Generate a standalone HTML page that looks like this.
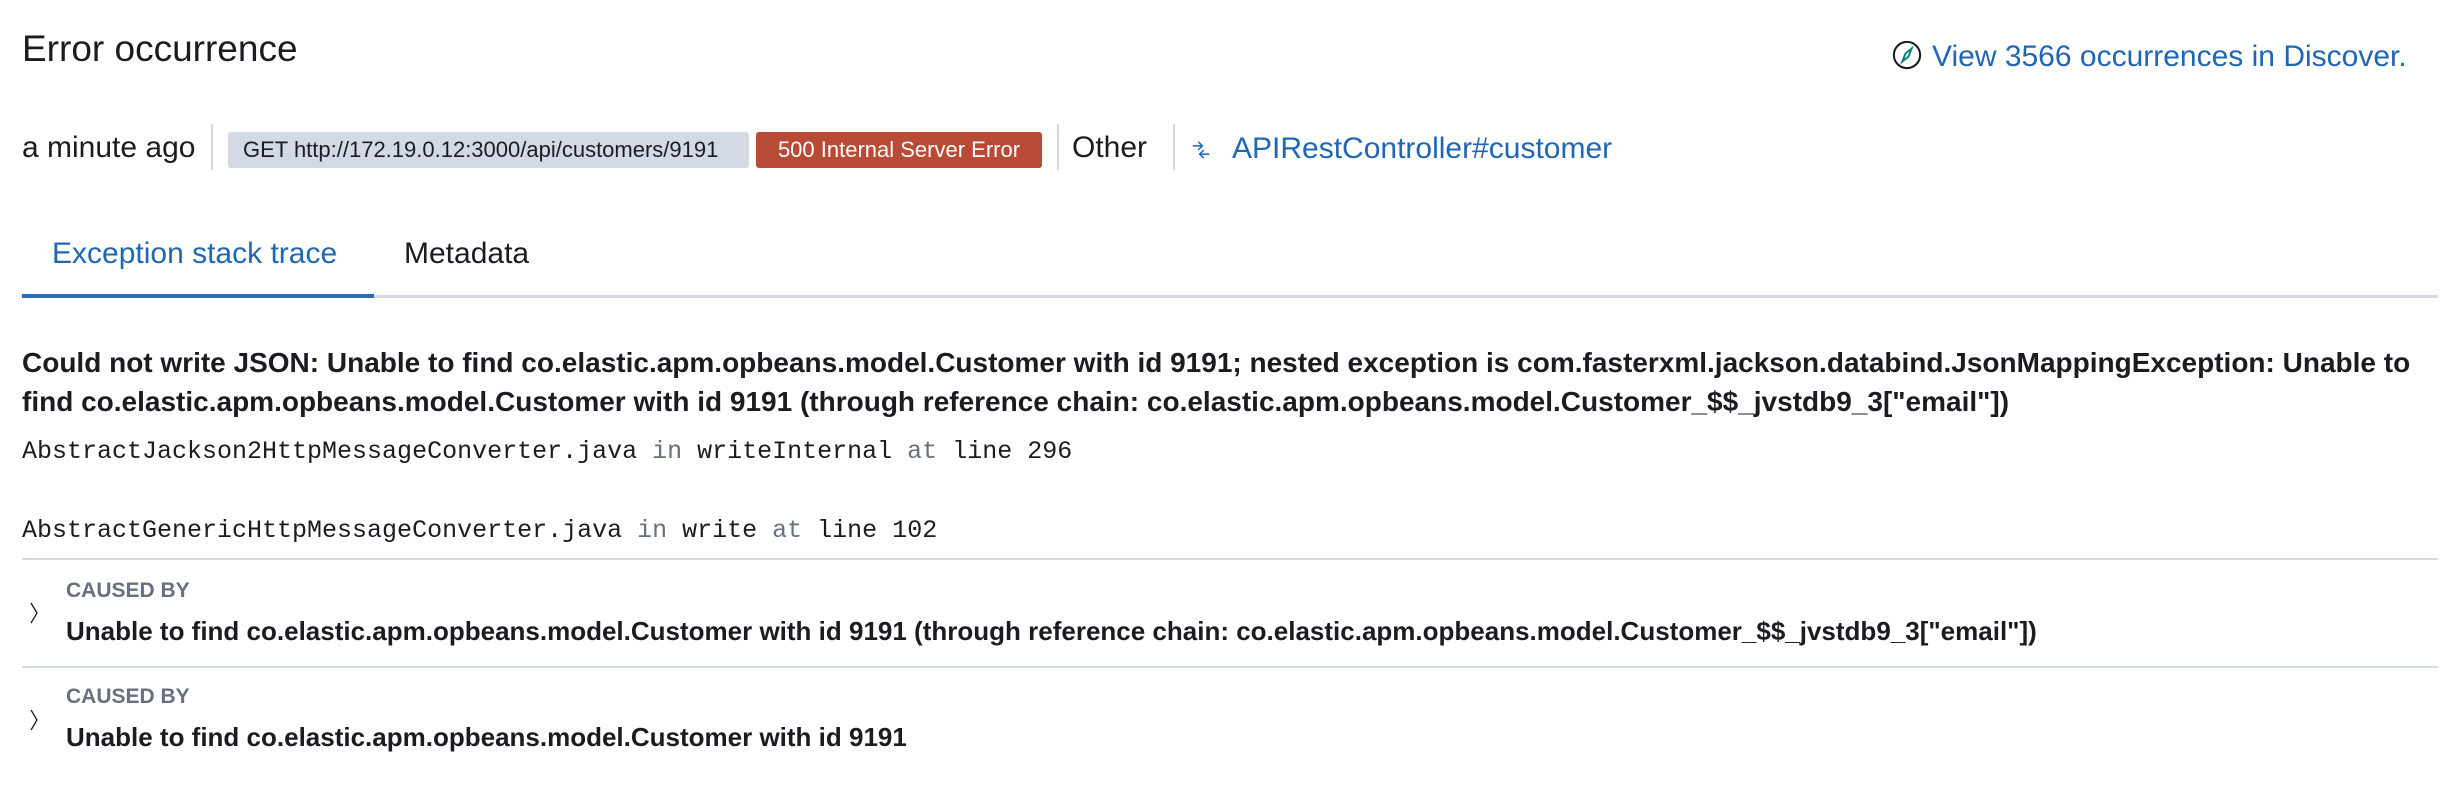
<!DOCTYPE html>
<html><head><meta charset="utf-8"><style>
*{margin:0;padding:0;box-sizing:border-box}
body{width:2458px;height:788px;background:#fff;font-family:"Liberation Sans",sans-serif;color:#1a1c21;position:relative;overflow:hidden}
.a{position:absolute;white-space:nowrap}
.blue{color:#1f66b3}
.mono{font-family:"Liberation Mono",monospace;font-size:25px}
.g{color:#69707d}
.sep{position:absolute;width:2px;background:#d3dae6}
.hl{position:absolute;height:2px;background:#d3dae6;left:22px;width:2416px}
.bold{font-weight:bold;font-size:26px}
.cb{font-weight:bold;font-size:21px;color:#69707d}
</style></head><body>
<div class="a" style="left:22px;top:28px;font-size:37px">Error occurrence</div>
<div class="a blue" style="left:1892px;top:40px;font-size:30px">
<svg width="30" height="30" viewBox="0 0 16 16" style="vertical-align:-4px;margin-right:10px"><circle cx="8" cy="8" r="7" fill="none" stroke="#1a1c21" stroke-width="1.1"/><path d="M10.5 4.5 L8.8 8.8 L5.5 11.5 L7.2 7.2Z" fill="none" stroke="#017d73" stroke-width="1"/></svg>View 3566 occurrences in Discover.</div>

<div class="a" style="left:22px;top:131px;font-size:30px">a minute ago</div>
<div class="sep" style="left:211px;top:124px;height:46px"></div>
<div class="a" style="left:228px;top:132px;width:521px;height:36px;background:#d3dae6;border-radius:3px;font-size:22px;line-height:36px;padding-left:15px">GET http://172.19.0.12:3000/api/customers/9191</div>
<div class="a" style="left:756px;top:132px;width:286px;height:36px;background:#b84a36;border-radius:3px;font-size:22px;line-height:36px;color:#fff;text-align:center">500 Internal Server Error</div>
<div class="sep" style="left:1057px;top:124px;height:46px"></div>
<div class="a" style="left:1072px;top:131px;font-size:30px">Other</div>
<div class="sep" style="left:1173px;top:124px;height:46px"></div>
<svg class="a" style="left:1190px;top:137px" width="22" height="26" viewBox="0 0 16 16"><path d="M2 5h7M6 2l3 3-3 3M14 11H7M10 8l-3 3 3 3" fill="none" stroke="#1f66b3" stroke-width="1.1"/></svg>
<div class="a blue" style="left:1232px;top:132px;font-size:30px">APIRestController#customer</div>

<div class="a blue" style="left:52px;top:237px;font-size:30px">Exception stack trace</div>
<div class="a" style="left:404px;top:237px;font-size:30px">Metadata</div>
<div class="a" style="left:22px;top:295px;width:2416px;height:3px;background:#d3dae6"></div>
<div class="a" style="left:22px;top:294px;width:352px;height:4px;background:#2a6bb5"></div>

<div class="a bold" style="left:22px;top:347px;font-size:28px">Could not write JSON: Unable to find co.elastic.apm.opbeans.model.Customer with id 9191; nested exception is com.fasterxml.jackson.databind.JsonMappingException: Unable to</div>
<div class="a bold" style="left:22px;top:386px;font-size:28px">find co.elastic.apm.opbeans.model.Customer with id 9191 (through reference chain: co.elastic.apm.opbeans.model.Customer_$$_jvstdb9_3["email"])</div>
<div class="a mono" style="left:22px;top:437px">AbstractJackson2HttpMessageConverter.java <span class="g">in</span> writeInternal <span class="g">at</span> line 296</div>
<div class="a mono" style="left:22px;top:516px">AbstractGenericHttpMessageConverter.java <span class="g">in</span> write <span class="g">at</span> line 102</div>
<div class="hl" style="top:558px"></div>
<div class="a cb" style="left:66px;top:579px">CAUSED BY</div>
<svg class="a" style="left:28px;top:601px" width="12" height="24" viewBox="0 0 12 24"><path d="M3 2l6 10-6 10" fill="none" stroke="#1a1c21" stroke-width="1.3"/></svg>
<div class="a bold" style="left:66px;top:616px">Unable to find co.elastic.apm.opbeans.model.Customer with id 9191 (through reference chain: co.elastic.apm.opbeans.model.Customer_$$_jvstdb9_3["email"])</div>
<div class="hl" style="top:666px"></div>
<div class="a cb" style="left:66px;top:685px">CAUSED BY</div>
<svg class="a" style="left:28px;top:708px" width="12" height="24" viewBox="0 0 12 24"><path d="M3 2l6 10-6 10" fill="none" stroke="#1a1c21" stroke-width="1.3"/></svg>
<div class="a bold" style="left:66px;top:722px">Unable to find co.elastic.apm.opbeans.model.Customer with id 9191</div>
</body></html>
